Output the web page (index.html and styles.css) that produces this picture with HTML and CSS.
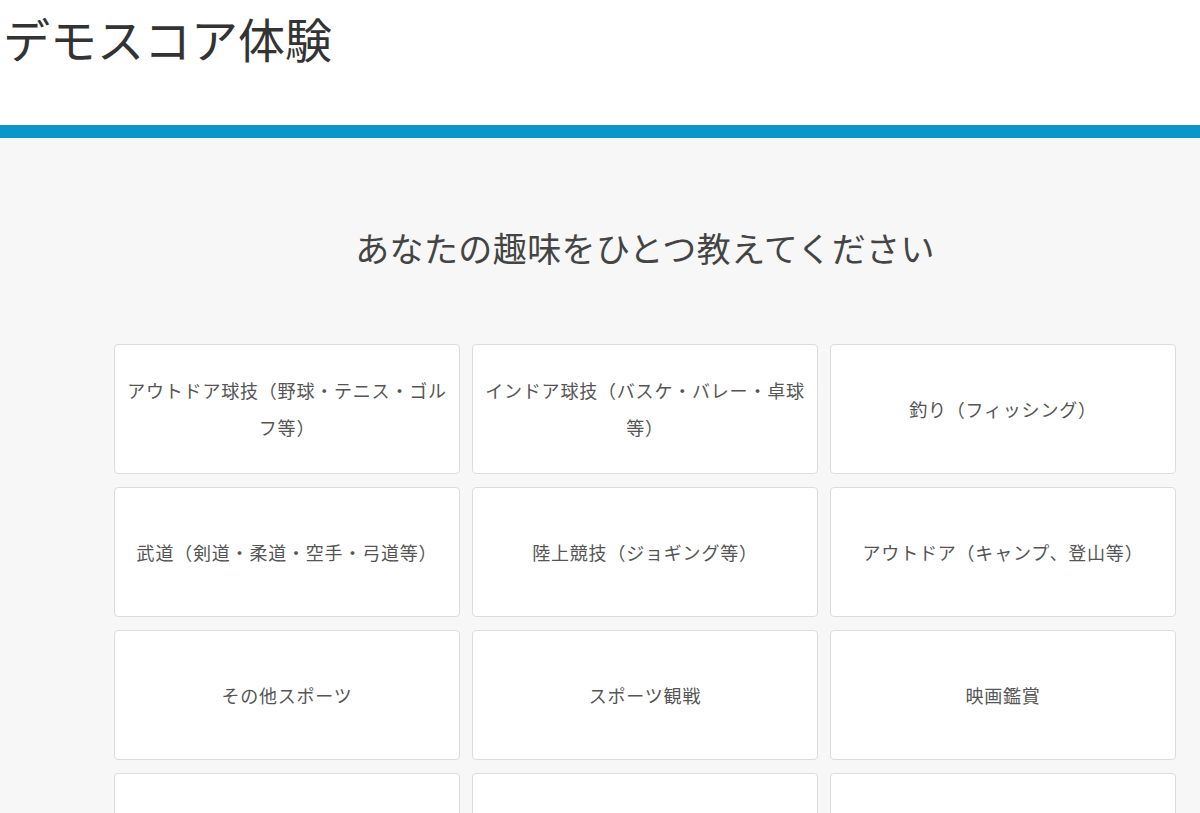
FILE: index.html
```html
<!DOCTYPE html>
<html lang="ja">
<head>
  <meta charset="UTF-8">
  <title>デモスコア体験</title>
  <link rel="stylesheet" href="styles.css">
</head>
<body>

  <header class="site-header">
    <h1>デモスコア体験</h1>
  </header>

  <main class="question">
    <h2>あなたの趣味をひとつ教えてください</h2>

    <div class="choices">
      <button class="choice">アウトドア球技（野球・テニス・ゴルフ等）</button>
      <button class="choice">インドア球技（バスケ・バレー・卓球等）</button>
      <button class="choice">釣り（フィッシング）</button>
      <button class="choice">武道（剣道・柔道・空手・弓道等）</button>
      <button class="choice">陸上競技（ジョギング等）</button>
      <button class="choice">アウトドア（キャンプ、登山等）</button>
      <button class="choice">その他スポーツ</button>
      <button class="choice">スポーツ観戦</button>
      <button class="choice">映画鑑賞</button>
      <button class="choice"></button>
      <button class="choice"></button>
      <button class="choice"></button>
    </div>
  </main>

</body>
</html>
```

FILE: styles.css
```css
body {
  margin: 0;
  font-family: "Noto Sans CJK JP", "Noto Sans", sans-serif;
  background-color: #f7f7f7;
  color: #333;
}
.site-header {
  height: 125px;
  background-color: #ffffff;
  border-bottom: 13px solid #0b96c9; /* 青いライン */
}
.site-header h1 {
  margin: 0;
  padding: 7px 0 0 3px;
  font-size: 47px;
  font-weight: normal;
  line-height: 62px;
  color: #333;
}
.question {
  padding: 0 24px 40px 114px;
}
.question h2 {
  margin: 0;
  padding: 88px 0 0;
  height: 118px;
  text-align: center;
  font-size: 34px;
  font-weight: normal;
  line-height: 44px;
  letter-spacing: 0.4px;
  color: #444;
}
.choices {
  display: grid;
  grid-template-columns: repeat(3, 346px);
  column-gap: 12px;
  row-gap: 13px;
}
.choice {
  height: 130px;
  padding: 0 10px;
  border: 1px solid #dcdcdc;
  border-radius: 4px;
  background-color: #ffffff;
  font-family: inherit;
  font-size: 18px;
  line-height: 37px;
  letter-spacing: 0.8px;
  color: #555;
  text-align: center;
  cursor: pointer;
}
.choice:hover {
  border-color: #0b96c9;
}
```
